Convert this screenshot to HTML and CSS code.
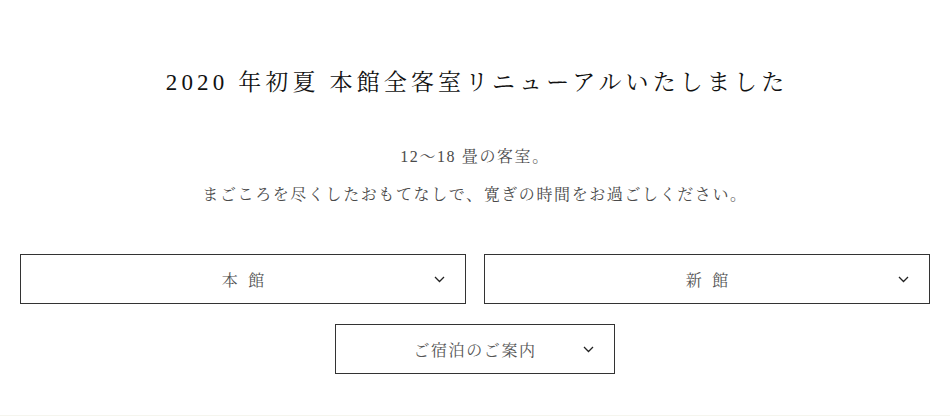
FILE: index.html
```html
<html>

<head>
  <meta charset="utf8">
  <title>2020年初夏 本館全客室リニューアル</title>
  <link rel="stylesheet" href="styles.css">
</head>

<body>
  <section class="renewal">
    <h1 class="title">2020 年初夏 本館全客室リニューアルいたしました</h1>
    <div class="lead">
      <p>12〜18 畳の客室。</p>
      <p>まごころを尽くしたおもてなしで、寛ぎの時間をお過ごしください。</p>
    </div>
    <div class="toggles">
      <button class="toggle">
        <span class="label wide">本 館</span>
        <svg class="chev" width="11" height="7" viewBox="0 0 11 7"><path d="M1 1l4.5 4.5L10 1" fill="none" stroke="#222" stroke-width="1.3"/></svg>
      </button>
      <button class="toggle">
        <span class="label wide">新 館</span>
        <svg class="chev" width="11" height="7" viewBox="0 0 11 7"><path d="M1 1l4.5 4.5L10 1" fill="none" stroke="#222" stroke-width="1.3"/></svg>
      </button>
    </div>
    <div class="toggles single">
      <button class="toggle small">
        <span class="label">ご宿泊のご案内</span>
        <svg class="chev" width="11" height="7" viewBox="0 0 11 7"><path d="M1 1l4.5 4.5L10 1" fill="none" stroke="#222" stroke-width="1.3"/></svg>
      </button>
    </div>
  </section>
  <section class="next"></section>
</body>

</html>
```

FILE: styles.css
```css
* {
  margin: 0;
  padding: 0;
  box-sizing: border-box;
}

body {
  font-family: "Liberation Serif", "Noto Serif CJK JP", "Noto Sans CJK JP", serif;
  background: #fff;
  color: #222;
}

.renewal {
  padding: 66px 20px 41px;
  text-align: center;
}

.title {
  font-size: 23px;
  font-weight: normal;
  line-height: 33px;
  letter-spacing: 0.18em;
  color: #111;
  margin-right: -0.18em;
}

.lead {
  margin-top: 39px;
  font-size: 16px;
  line-height: 38px;
  letter-spacing: 0.1em;
  color: #4a4a4a;
}

.toggles {
  display: flex;
  gap: 18px;
  margin-top: 40px;
}

.toggles.single {
  justify-content: center;
  margin-top: 20px;
}

.toggle {
  flex: 1;
  height: 50px;
  border: 1px solid #333;
  background: #fff;
  font-family: inherit;
  font-size: 16px;
  letter-spacing: 0.1em;
  color: #555;
  position: relative;
  display: flex;
  align-items: center;
  justify-content: center;
}

.toggle.small {
  flex: 0 0 280px;
}

.label.wide {
  letter-spacing: 0.2em;
  margin-right: -0.2em;
}

.chev {
  position: absolute;
  right: 20px;
  top: 21px;
}

.next {
  height: 40px;
  background: #f5f5ee;
}
```
